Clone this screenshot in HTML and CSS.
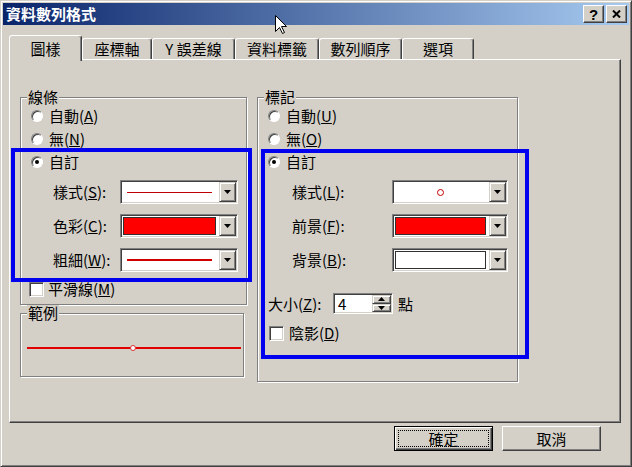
FILE: index.html
```html
<!DOCTYPE html>
<html lang="zh-Hant">
<head>
    <meta charset="UTF-8">
    <meta name="viewport" content="width=device-width, initial-scale=1.0">
    <link rel="stylesheet" href="styles.css">
    <title>資料數列格式</title>
</head>
<body>
<div class="window">
    <div class="titlebar">
        <span class="title">資料數列格式</span>
        <div class="tbtns">
            <span class="tbtn">?</span>
            <span class="tbtn"><svg width="9" height="8" viewBox="0 0 9 8"><path d="M1 0.5 L8 7.5 M8 0.5 L1 7.5" stroke="#000" stroke-width="2"/></svg></span>
        </div>
    </div>

    <div class="tabs">
        <div class="tab active t1">圖樣</div>
        <div class="tab t2">座標軸</div>
        <div class="tab t3">Y 誤差線</div>
        <div class="tab t4">資料標籤</div>
        <div class="tab t5">數列順序</div>
        <div class="tab t6">選項</div>
    </div>

    <div class="panel">
        <div class="col leftcol">
            <fieldset class="grp line">
                <legend>線條</legend>
                <div class="opt"><span class="radio"></span>自動(<u>A</u>)</div>
                <div class="opt"><span class="radio"></span>無(<u>N</u>)</div>
                <div class="opt"><span class="radio on"></span>自訂</div>
                <div class="frow first">
                    <span class="lbl">樣式(<u>S</u>):</span>
                    <div class="combo">
                        <div class="field"><span class="thin"></span></div>
                        <div class="arrow"><svg width="7" height="4" viewBox="0 0 7 4"><path d="M0 0 H7 L3.5 4 Z" fill="#000"/></svg></div>
                    </div>
                </div>
                <div class="frow">
                    <span class="lbl">色彩(<u>C</u>):</span>
                    <div class="combo">
                        <div class="field sw"><span class="swatch red"></span></div>
                        <div class="arrow"><svg width="7" height="4" viewBox="0 0 7 4"><path d="M0 0 H7 L3.5 4 Z" fill="#000"/></svg></div>
                    </div>
                </div>
                <div class="frow">
                    <span class="lbl">粗細(<u>W</u>):</span>
                    <div class="combo">
                        <div class="field"><span class="thick"></span></div>
                        <div class="arrow"><svg width="7" height="4" viewBox="0 0 7 4"><path d="M0 0 H7 L3.5 4 Z" fill="#000"/></svg></div>
                    </div>
                </div>
                <div class="chk smooth"><span class="box"></span>平滑線(<u>M</u>)</div>
            </fieldset>
            <fieldset class="grp sample">
                <legend>範例</legend>
                <svg class="preview" width="214" height="10" viewBox="0 0 214 10">
                    <line x1="0" y1="5" x2="214" y2="5" stroke="#e00000" stroke-width="2"/>
                    <circle cx="106" cy="5" r="2.5" fill="#fff" stroke="#e03030" stroke-width="1"/>
                </svg>
            </fieldset>
        </div>

        <div class="col rightcol">
            <fieldset class="grp marker">
                <legend>標記</legend>
                <div class="opt"><span class="radio"></span>自動(<u>U</u>)</div>
                <div class="opt"><span class="radio"></span>無(<u>O</u>)</div>
                <div class="opt"><span class="radio on"></span>自訂</div>
                <div class="frow first">
                    <span class="lbl">樣式(<u>L</u>):</span>
                    <div class="combo">
                        <div class="field center"><span class="ring"></span></div>
                        <div class="arrow"><svg width="7" height="4" viewBox="0 0 7 4"><path d="M0 0 H7 L3.5 4 Z" fill="#000"/></svg></div>
                    </div>
                </div>
                <div class="frow">
                    <span class="lbl">前景(<u>F</u>):</span>
                    <div class="combo">
                        <div class="field sw"><span class="swatch red"></span></div>
                        <div class="arrow"><svg width="7" height="4" viewBox="0 0 7 4"><path d="M0 0 H7 L3.5 4 Z" fill="#000"/></svg></div>
                    </div>
                </div>
                <div class="frow">
                    <span class="lbl">背景(<u>B</u>):</span>
                    <div class="combo">
                        <div class="field sw"><span class="swatch white"></span></div>
                        <div class="arrow"><svg width="7" height="4" viewBox="0 0 7 4"><path d="M0 0 H7 L3.5 4 Z" fill="#000"/></svg></div>
                    </div>
                </div>
                <div class="sizerow">
                    <span class="slbl">大小(<u>Z</u>):</span>
                    <div class="spin">
                        <span class="val">4</span>
                        <div class="spinbtns">
                            <span class="sb"><svg width="7" height="4" viewBox="0 0 7 4"><path d="M0 4 H7 L3.5 0 Z" fill="#000"/></svg></span>
                            <span class="sb"><svg width="7" height="4" viewBox="0 0 7 4"><path d="M0 0 H7 L3.5 4 Z" fill="#000"/></svg></span>
                        </div>
                    </div>
                    <span class="unit">點</span>
                </div>
                <div class="chk shadow"><span class="box"></span>陰影(<u>D</u>)</div>
            </fieldset>
        </div>
    </div>

    <div class="actions">
        <button class="btn def"><span class="focus">確定</span></button>
        <button class="btn">取消</button>
    </div>

    <div class="mark ml"></div>
    <div class="mark mr"></div>
    <svg class="cursor" width="13" height="20" viewBox="0 0 13 20">
        <path d="M0.5 0.5 L0.5 16.5 L4.5 12.5 L7.5 18.5 L9.5 17.5 L6.5 11.5 L11.5 11.5 Z" fill="#fff" stroke="#000" stroke-width="1"/>
    </svg>
</div>
</body>
</html>
```

FILE: styles.css
```css
* {box-sizing: border-box}
body {margin: 0; background: #d4d0c8; font-family: "Noto Sans CJK TC", "Noto Sans", sans-serif; font-size: 15px; color: #000}
u {text-decoration: underline; text-underline-offset: 1px}

.window {position: relative; width: 632px; height: 467px; border: 1px solid; border-color: #d4d0c8 #404040 #404040 #d4d0c8; padding: 2px; box-shadow: inset 1px 1px #fff, inset -1px -1px #808080; background: #d4d0c8; display: flex; flex-direction: column}

/* title bar */
.titlebar {height: 22px; background: linear-gradient(to right, #0a246a, #a6caf0); display: flex; align-items: center; justify-content: space-between; padding: 0 2px 0 3px}
.title {color: #fff; font-weight: bold; line-height: 22px}
.tbtns {display: flex; gap: 2px}
.tbtn {width: 21px; height: 18px; background: #d4d0c8; border: 1px solid; border-color: #fff #404040 #404040 #fff; box-shadow: inset -1px -1px #808080; display: flex; align-items: center; justify-content: center; font: bold 15px "Liberation Sans", sans-serif}

/* tabs */
.tabs {display: flex; align-items: flex-end; height: 24px; margin: 10px 0 0 6px; position: relative; z-index: 1}
.tab {height: 21px; border: 1px solid; border-bottom: none; border-color: #fff #404040 transparent #fff; border-radius: 3px 3px 0 0; box-shadow: inset -1px 0 #808080; display: flex; align-items: center; justify-content: center; background: #d4d0c8; line-height: 16px}
.tab.active {height: 26px; margin-bottom: -2px}
.t1 {width: 73px}
.t2 {width: 70px}
.t3 {width: 83px}
.t4 {width: 84px}
.t5 {width: 83px}
.t6 {width: 72px}

/* panel */
.panel {height: 364px; margin: 0 8px 0 6px; border: 1px solid; border-color: #fff #404040 #404040 #fff; box-shadow: inset -1px -1px #808080; display: flex; gap: 10px; padding: 29px 0 0 10px}
.col {display: flex; flex-direction: column}

fieldset.grp {margin: 0; padding: 0; min-width: 0; border: 1px solid #808080; box-shadow: inset 1px 1px #fff, 1px 1px #fff}
legend {padding: 0 1px; margin-left: 6px; line-height: 16px; background: #d4d0c8}
.line {width: 227px; height: 216px}
.sample {width: 224px; height: 72px; margin-top: 5px}
.marker {width: 261px; height: 293px}

.opt {height: 22px; display: flex; align-items: center; padding-left: 10px; line-height: 16px}
.opt + .opt {height: 23px}
.radio {width: 12px; height: 12px; border-radius: 50%; background: #fff; border: 1px solid; border-color: #808080 #fff #fff #808080; box-shadow: inset 1px 1px #404040; margin-right: 6px; display: flex; align-items: center; justify-content: center}
.radio.on::after {content: ""; width: 4px; height: 4px; border-radius: 50%; background: #000}

.frow {display: flex; align-items: center; height: 24px; margin-top: 10px; line-height: 16px}
.frow.first {margin-top: 7px}
.line .frow {padding-left: 32px}
.line .lbl {width: 67px}
.marker .frow {padding-left: 34px}
.marker .lbl {width: 100px}

.combo {display: flex; height: 24px; background: #fff; border: 1px solid; border-color: #808080 #fff #fff #808080; box-shadow: inset 1px 1px #404040, inset -1px -1px #d4d0c8; padding: 1px}
.line .combo {width: 118px}
.marker .combo {width: 116px}
.field {flex: 1; display: flex; align-items: center; padding: 0 7px 0 5px}
.field.sw {padding: 1px 3px 1px 1px; align-items: stretch}
.field.center {justify-content: center}
.thin {flex: 1; height: 1px; background: #c00000}
.thick {flex: 1; height: 2px; background: #d00000}
.swatch {flex: 1; border: 1px solid #303030}
.swatch.red {background: #ff0000}
.swatch.white {background: #fff}
.ring {width: 7px; height: 7px; border-radius: 50%; border: 1px solid #c00000}
.arrow {width: 17px; background: #d4d0c8; border: 1px solid; border-color: #d4d0c8 #404040 #404040 #d4d0c8; box-shadow: inset 1px 1px #fff, inset -1px -1px #808080; display: flex; align-items: center; justify-content: center}

.chk {display: flex; align-items: center; height: 16px; line-height: 16px}
.box {width: 15px; height: 15px; background: #fff; border: 1px solid; border-color: #808080 #fff #fff #808080; box-shadow: inset 1px 1px #404040, inset -1px -1px #d4d0c8}
.smooth {margin-top: 9px; padding-left: 8px}
.smooth .box {margin-right: 4px}
.shadow {margin-top: 11px; padding-left: 11px}
.shadow .box {margin-right: 5px}

.sizerow {display: flex; align-items: center; height: 21px; margin-top: 21px; padding-left: 10px; line-height: 16px}
.slbl {width: 65px}
.spin {width: 60px; height: 21px; display: flex; background: #fff; border: 1px solid; border-color: #808080 #fff #fff #808080; box-shadow: inset 1px 1px #404040, inset -1px -1px #d4d0c8; padding: 1px}
.val {flex: 1; padding-left: 3px; line-height: 17px}
.spinbtns {width: 19px; display: flex; flex-direction: column}
.sb {flex: 1; background: #d4d0c8; border: 1px solid; border-color: #d4d0c8 #404040 #404040 #d4d0c8; box-shadow: inset 1px 1px #fff, inset -1px -1px #808080; display: flex; align-items: center; justify-content: center}
.unit {margin-left: 5px}

.preview {display: block; margin: 22px 0 0 6px}

/* buttons */
.actions {display: flex; gap: 9px; margin: 3px 0 0 391px}
.btn {width: 99px; height: 25px; font: 15px "Noto Sans CJK TC", sans-serif; background: #d4d0c8; border: 1px solid; border-color: #fff #404040 #404040 #fff; box-shadow: inset -1px -1px #808080; padding: 0; display: flex; align-items: center; justify-content: center; line-height: 16px}
.btn.def {border-color: #000; box-shadow: inset 1px 1px #fff, inset -1px -1px #404040, inset -2px -2px #808080; padding: 3px}
.focus {flex: 1; align-self: stretch; border: 1px dotted #000; display: flex; align-items: center; justify-content: center}

/* annotation frames and pointer */
.mark {position: absolute; border: 4px solid #0000ee}
.ml {left: 10px; top: 147px; width: 241px; height: 134px}
.mr {left: 260px; top: 148px; width: 268px; height: 210px}
.cursor {position: absolute; left: 274px; top: 14px}
```
